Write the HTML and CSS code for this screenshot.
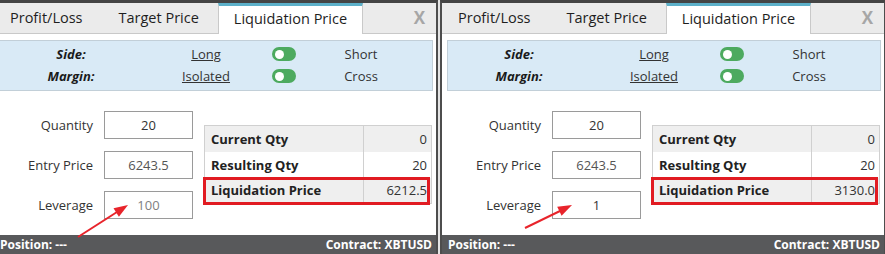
FILE: index.html
```html
<!DOCTYPE html>
<html>
<head lang="en">
    <meta charset="UTF-8">
    <title>Liquidation Price</title>
    <link rel="stylesheet" href="styles.css">
</head>
<body>
<div class="stage">
    <!-- leverage 100 -->
    <div class="panel">
        <div class="tabs">
            <div class="tab">Profit/Loss</div>
            <div class="tab">Target Price</div>
            <div class="tab tab-active">Liquidation Price</div>
            <div class="close">X</div>
        </div>
        <div class="options">
            <div class="opt-label">Side:</div>
            <div class="opt-link">Long</div>
            <div class="toggle"></div>
            <div class="opt-alt">Short</div>
            <div class="opt-label">Margin:</div>
            <div class="opt-link">Isolated</div>
            <div class="toggle"></div>
            <div class="opt-alt">Cross</div>
        </div>
        <div class="calc">
            <div class="fields">
                <label class="field-label">Quantity</label>
                <input class="field-input" type="text" value="20" readonly/>
                <label class="field-label">Entry Price</label>
                <input class="field-input price" type="text" value="6243.5" readonly/>
                <label class="field-label">Leverage</label>
                <input class="field-input lev" type="text" value="100" readonly/>
            </div>
            <div class="result">
                <table>
                    <tr><td class="name">Current Qty</td><td class="val">0</td></tr>
                    <tr><td class="name">Resulting Qty</td><td class="val">20</td></tr>
                    <tr><td class="name">Liquidation Price</td><td class="val">6212.5</td></tr>
                </table>
                <div class="red-box"></div>
            </div>
        </div>
        <div class="status">
            <span>Position: ---</span>
            <span>Contract: XBTUSD</span>
        </div>
        <svg class="arrow" viewBox="0 0 446 254">
            <line x1="86" y1="237" x2="125" y2="212" stroke="#e8242b" stroke-width="2"/>
            <polygon points="136,205 126.9,216.7 121.5,208.3" fill="#e8242b"/>
        </svg>
    </div>

    <!-- leverage 1 -->
    <div class="panel panel-right">
        <div class="tabs">
            <div class="tab">Profit/Loss</div>
            <div class="tab">Target Price</div>
            <div class="tab tab-active">Liquidation Price</div>
            <div class="close">X</div>
        </div>
        <div class="options">
            <div class="opt-label">Side:</div>
            <div class="opt-link">Long</div>
            <div class="toggle"></div>
            <div class="opt-alt">Short</div>
            <div class="opt-label">Margin:</div>
            <div class="opt-link">Isolated</div>
            <div class="toggle"></div>
            <div class="opt-alt">Cross</div>
        </div>
        <div class="calc">
            <div class="fields">
                <label class="field-label">Quantity</label>
                <input class="field-input" type="text" value="20" readonly/>
                <label class="field-label">Entry Price</label>
                <input class="field-input price" type="text" value="6243.5" readonly/>
                <label class="field-label">Leverage</label>
                <input class="field-input" type="text" value="1" readonly/>
            </div>
            <div class="result">
                <table>
                    <tr><td class="name">Current Qty</td><td class="val">0</td></tr>
                    <tr><td class="name">Resulting Qty</td><td class="val">20</td></tr>
                    <tr><td class="name">Liquidation Price</td><td class="val">3130.0</td></tr>
                </table>
                <div class="red-box"></div>
            </div>
        </div>
        <div class="status">
            <span>Position: ---</span>
            <span>Contract: XBTUSD</span>
        </div>
        <svg class="arrow" viewBox="0 0 446 254">
            <line x1="85" y1="228" x2="120" y2="211" stroke="#e8242b" stroke-width="2"/>
            <polygon points="132,205 121.6,215.7 117.2,206.7" fill="#e8242b"/>
        </svg>
    </div>
</div>
</body>
</html>
```

FILE: styles.css
```css
* {
    margin: 0;
    padding: 0;
    box-sizing: border-box;
}

body {
    width: 885px;
    height: 254px;
    overflow: hidden;
    background: #e4e4e4;
    font-family: "Open Sans", "Liberation Sans", sans-serif;
    color: #333;
}

.stage {
    display: flex;
    margin-left: -8px;
}

.panel {
    position: relative;
    display: flex;
    flex-direction: column;
    flex: none;
    width: 446px;
    height: 254px;
    background: #fff;
    border-left: 2px solid #4d4d4d;
    border-right: 2px solid #4d4d4d;
    border-top: 3px solid #444;
}

.panel + .panel {
    margin-left: 2px;
}

/* tabs */
.tabs {
    display: flex;
    height: 31px;
    background: #ebebeb;
    border-bottom: 1px solid #c9c9c9;
}

.tab {
    padding: 0 18px;
    font-size: 14.5px;
    line-height: 30px;
    color: #1e1e1e;
    white-space: nowrap;
}

.tab:first-child {
    padding-left: 16px;
}

.tab-active {
    height: 31px;
    margin-left: 1px;
    margin-bottom: -1px;
    padding: 0 15px;
    line-height: 25px;
    background: #fff;
    border: 1px solid #c9c9c9;
    border-top: 3px solid #5cb0c9;
    border-bottom: 0;
}

.close {
    margin-left: auto;
    padding-right: 11px;
    font-size: 17px;
    font-weight: 700;
    line-height: 30px;
    color: #a6a6a6;
}

/* side / margin switches */
.options {
    display: grid;
    grid-template-columns: 142px 128px 28px 126px;
    grid-auto-rows: 22px;
    align-items: center;
    margin: 6px 3px 0 5px;
    padding: 2px 0 3px;
    background: #d9eaf6;
    border: 1px solid #c2cfd8;
    font-size: 13px;
    text-align: center;
}

.opt-label {
    font-weight: 700;
    font-style: italic;
    color: #1a1a1a;
}

.opt-link {
    text-decoration: underline;
}

.toggle {
    display: flex;
    align-items: center;
    justify-self: center;
    width: 24px;
    height: 14px;
    padding: 0 3px;
    border-radius: 7px;
    background: #4daa5f;
}

.toggle::before {
    content: "";
    width: 9px;
    height: 9px;
    border-radius: 50%;
    background: #fff;
}

/* inputs + result */
.calc {
    display: flex;
    padding-top: 20px;
}

.fields {
    display: grid;
    grid-template-columns: 99px 89px;
    column-gap: 11px;
    row-gap: 12px;
    align-items: center;
}

.field-label {
    text-align: right;
    font-size: 13px;
}

.field-input {
    width: 89px;
    height: 28px;
    border: 1px solid #9a9a9a;
    text-align: center;
    font: 13px "Open Sans", "Liberation Sans", sans-serif;
    color: #333;
    outline: none;
}

.field-input.price {
    color: #555;
}

.field-input.lev {
    color: #808080;
}

.result {
    position: relative;
    align-self: flex-start;
    width: 228px;
    margin: 14px 0 0 11px;
}

.result table {
    width: 100%;
    border-collapse: collapse;
    border: 1px solid #d0d0d0;
    font-size: 13px;
}

.result td {
    height: 26px;
    padding: 0 4px 0 6px;
}

.result tr:nth-child(odd) {
    background: #efefef;
}

.result .name {
    width: 159px;
    font-weight: 700;
    color: #222;
    border-right: 1px solid #d0d0d0;
}

.result .val {
    text-align: right;
}

.red-box {
    position: absolute;
    left: -1px;
    top: 52px;
    width: 227px;
    height: 28px;
    border: 3px solid #e11b22;
}

/* status bar */
.status {
    display: flex;
    justify-content: space-between;
    height: 19px;
    margin-top: auto;
    padding: 0 4px 0 6px;
    background: #58595b;
    color: #fff;
    font-size: 12px;
    font-weight: 700;
    line-height: 19px;
}

.arrow {
    position: absolute;
    left: -2px;
    top: -3px;
    width: 446px;
    height: 254px;
    pointer-events: none;
}
```
